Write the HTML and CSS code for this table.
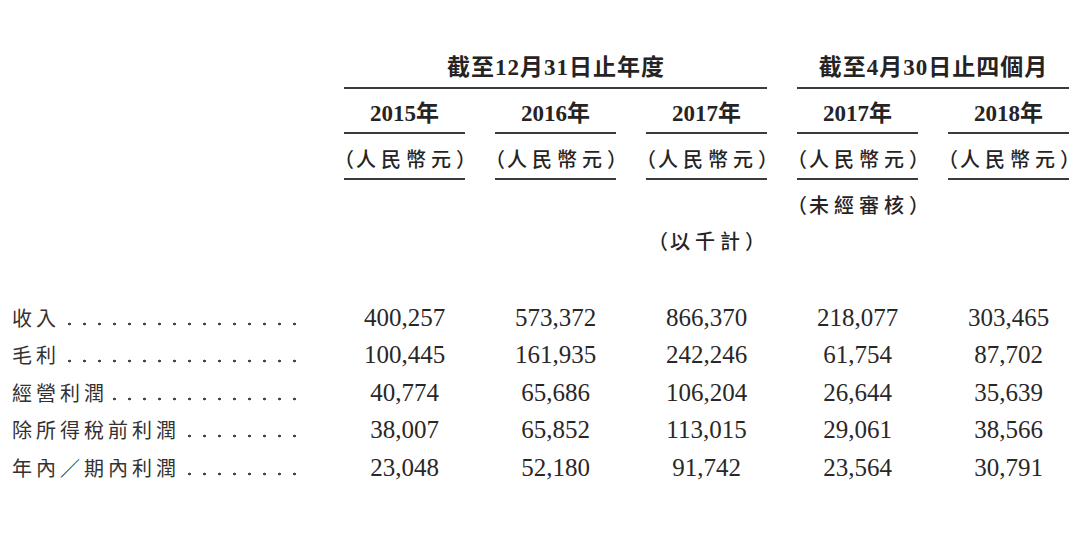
FILE: index.html
```html
<!DOCTYPE html>
<html lang="zh-Hant">
<head>
<meta charset="utf-8">
<title>財務資料</title>
<link rel="stylesheet" href="styles.css">
</head>
<body>
<div class="sheet">
  <div class="row groups">
    <div class="group g1">截至12月31日止年度</div>
    <div class="group g2">截至4月30日止四個月</div>
  </div>
  <div class="row years">
    <div></div>
    <div class="hcell">2015年</div>
    <div class="hcell">2016年</div>
    <div class="hcell">2017年</div>
    <div class="hcell">2017年</div>
    <div class="hcell">2018年</div>
  </div>
  <div class="row currency">
    <div></div>
    <div class="hcell"><span class="po">（</span>人民幣元<span class="pc">）</span></div>
    <div class="hcell"><span class="po">（</span>人民幣元<span class="pc">）</span></div>
    <div class="hcell"><span class="po">（</span>人民幣元<span class="pc">）</span></div>
    <div class="hcell"><span class="po">（</span>人民幣元<span class="pc">）</span></div>
    <div class="hcell"><span class="po">（</span>人民幣元<span class="pc">）</span></div>
  </div>
  <div class="row note">
    <div></div><div></div><div></div><div></div>
    <div class="ncell"><span class="po">（</span>未經審核<span class="pc">）</span></div>
    <div></div>
  </div>
  <div class="row units">
    <div></div><div></div><div></div>
    <div class="ncell"><span class="po">（</span>以千計<span class="pc">）</span></div>
    <div></div><div></div>
  </div>

  <div class="data">
    <div class="row drow">
      <div class="label"><span>收入</span><span class="leader gap"></span></div>
      <div class="num">400,257</div><div class="num">573,372</div><div class="num">866,370</div><div class="num">218,077</div><div class="num">303,465</div>
    </div>
    <div class="row drow">
      <div class="label"><span>毛利</span><span class="leader gap"></span></div>
      <div class="num">100,445</div><div class="num">161,935</div><div class="num">242,246</div><div class="num">61,754</div><div class="num">87,702</div>
    </div>
    <div class="row drow">
      <div class="label"><span>經營利潤</span><span class="leader"></span></div>
      <div class="num">40,774</div><div class="num">65,686</div><div class="num">106,204</div><div class="num">26,644</div><div class="num">35,639</div>
    </div>
    <div class="row drow">
      <div class="label"><span>除所得稅前利潤</span><span class="leader gap"></span></div>
      <div class="num">38,007</div><div class="num">65,852</div><div class="num">113,015</div><div class="num">29,061</div><div class="num">38,566</div>
    </div>
    <div class="row drow">
      <div class="label"><span>年內／期內利潤</span><span class="leader"></span></div>
      <div class="num">23,048</div><div class="num">52,180</div><div class="num">91,742</div><div class="num">23,564</div><div class="num">30,791</div>
    </div>
  </div>
</div>
</body>
</html>
```
FILE: styles.css
```css
html, body {
  margin: 0;
  padding: 0;
  background: #ffffff;
}

body {
  width: 1080px;
  height: 558px;
  overflow: hidden;
  color: #262324;
  font-family: "Liberation Serif", "Noto Sans CJK TC", serif;
}

.sheet {
  padding-top: 53px;
}

.row {
  display: grid;
  grid-template-columns: 302px repeat(5, 121px);
  column-gap: 30px;
  padding-left: 12px;
}

.groups .group {
  font-size: 23px;
  font-weight: 700;
  letter-spacing: 1px;
  line-height: 30px;
  text-align: center;
  padding-left: 1px;
  padding-bottom: 4px;
  border-bottom: 2px solid #3c3a3b;
}

.groups .g1 {
  grid-column: 2 / 5;
}

.groups .g2 {
  grid-column: 5 / 7;
}

.years .hcell {
  font-size: 23px;
  font-weight: 700;
  line-height: 30px;
  text-align: center;
  padding-top: 10px;
  padding-bottom: 3px;
  border-bottom: 2px solid #3c3a3b;
}

.currency .hcell,
.note .ncell,
.units .ncell {
  font-family: "Noto Sans CJK TC", sans-serif;
  font-size: 20px;
  font-weight: 500;
  letter-spacing: 5px;
  line-height: 30px;
  text-align: center;
  white-space: nowrap;
}

.po {
  letter-spacing: 0;
  margin-left: -10px;
  margin-right: 2px;
}

.pc {
  letter-spacing: 0;
  margin-right: -10px;
}

.currency .hcell {
  padding-top: 10px;
  padding-bottom: 4px;
  border-bottom: 2px solid #3c3a3b;
}

.note {
  padding-top: 10px;
}

.units {
  padding-top: 6px;
}

.data {
  padding-top: 43px;
}

.drow {
  height: 37.4px;
  align-items: center;
}

.label {
  display: flex;
  align-items: stretch;
  height: 37.4px;
  padding-right: 12px;
  font-family: "Noto Sans CJK TC", sans-serif;
  font-size: 20px;
  font-weight: 400;
  letter-spacing: 4px;
  line-height: 37.4px;
  color: #333132;
}

.leader {
  flex: 1;
  background-image: radial-gradient(circle at center, #444 1.1px, transparent 1.7px);
  background-size: 15px 4px;
  background-repeat: repeat-x;
  background-position: right 0 top 23px;
}

.leader.gap {
  margin-left: 6px;
}

.num {
  font-size: 25px;
  line-height: 37.4px;
  text-align: center;
  color: #2a2728;
}
```
